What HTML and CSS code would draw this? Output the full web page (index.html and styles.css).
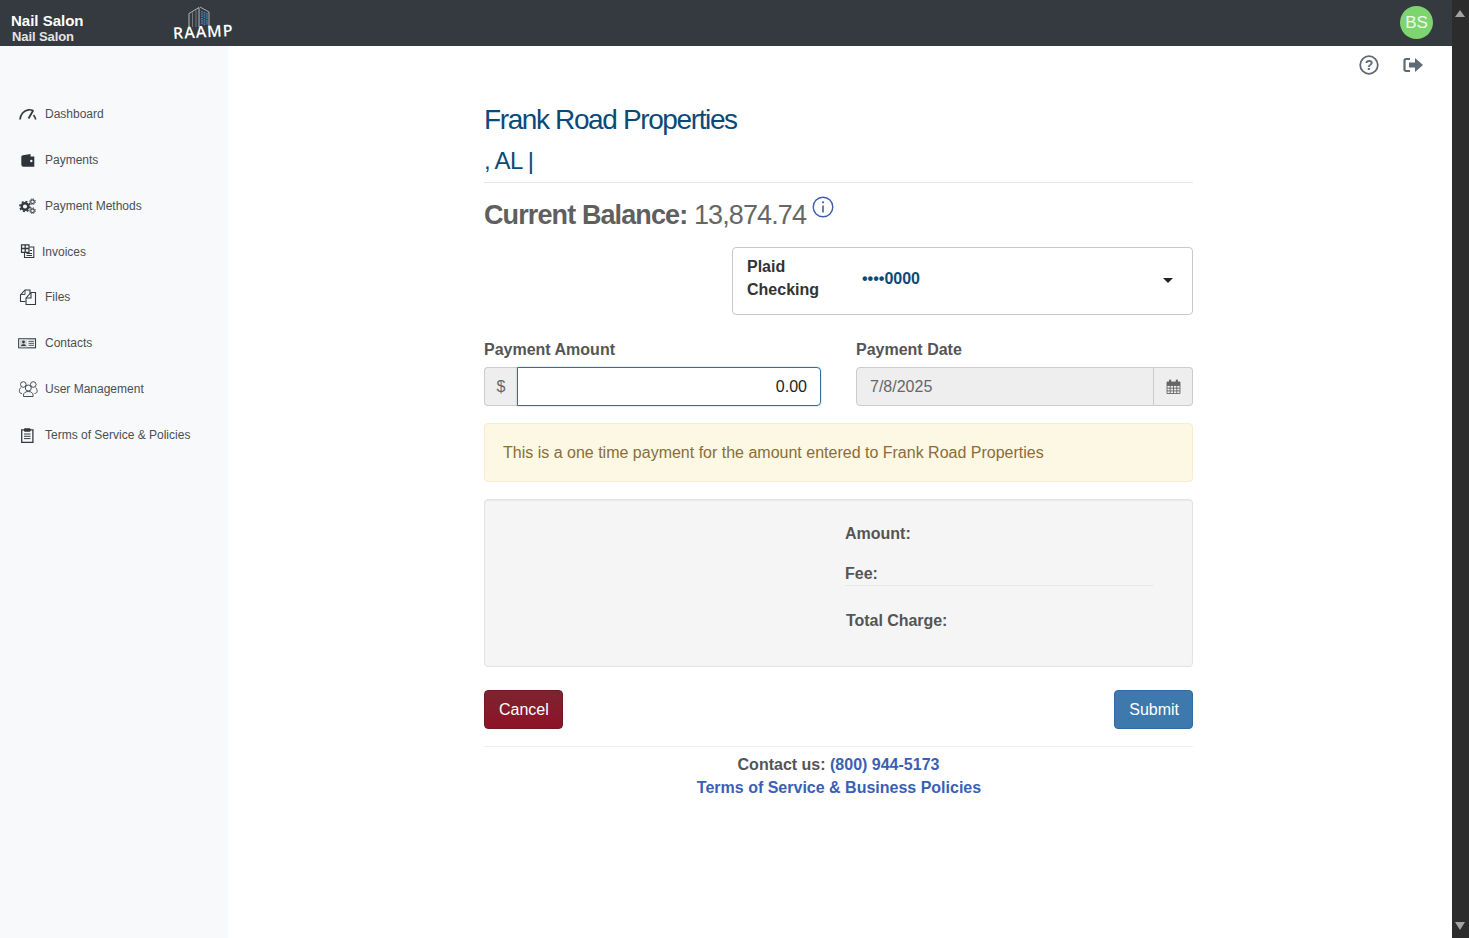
FILE: index.html
```html
<!DOCTYPE html>
<html lang="en">
<head>
<meta charset="utf-8">
<title>Frank Road Properties</title>
<link rel="stylesheet" href="styles.css">
</head>
<body>
<div class="window">
  <div class="page">
    <header class="topbar">
      <div class="brand"><div class="brand-a">Nail Salon</div><div class="brand-b">Nail Salon</div></div>
      <div class="logo">
        <svg class="logo-mark" width="22" height="22" viewBox="0 0 22 22"><path d="M1 21V7.500L11 1.500V21" fill="none" stroke="#b4b7bb" stroke-width="1"/><path d="M4.500 21V6.500M8 21V4.500" stroke="#85898e" stroke-width=".8"/><path d="M12 1l9 5v15" fill="none" stroke="#a9adb2" stroke-width="1"/><path d="M14 5v14M16.500 6v13M19 7v12" stroke="#3f86b3" stroke-width="1.600" stroke-dasharray="1.500 .8"/></svg>
        <span class="logo-text">RAAMP</span>
      </div>
      <div class="avatar">BS</div>
    </header>
    <div class="body">
      <nav class="sidebar">
        <a class="nav-item"><svg class="ico" viewBox="0 0 20 16"><path d="M2 13.500C2.200 9 5.500 4.500 10.300 3.800C12 3.600 13.500 3.800 15 4.500" fill="none" stroke="#343a40" stroke-width="1.700"/><path d="M10.500 12.500L15.300 4.200" stroke="#343a40" stroke-width="1.800"/><path d="M15.500 9C16.500 10.300 17.300 11.800 17.700 13.500" fill="none" stroke="#343a40" stroke-width="1.600"/></svg><span>Dashboard</span></a>
        <a class="nav-item"><svg class="ico" viewBox="0 0 20 16"><path d="M3.300 5c0-1 .7-1.600 1.700-1.800L12.500 2v2.500h3.800v10.300H5.500a2.200 2.200 0 0 1-2.200-2.200z" fill="#2f343a"/><circle cx="13.300" cy="9" r="1.200" fill="#f8f9fa"/></svg><span>Payments</span></a>
        <a class="nav-item"><svg class="ico" viewBox="0 0 20 16"><g fill="none" stroke="#343a40"><circle cx="7" cy="8.500" r="3.300" stroke-width="2.400"/><circle cx="7" cy="8.500" r="5" stroke-width="1.700" stroke-dasharray="2 1.900"/><circle cx="14.500" cy="3.700" r="1.800" stroke-width="1.100"/><circle cx="14.500" cy="3.700" r="2.900" stroke-width="1" stroke-dasharray="1.100 1.180"/><circle cx="14.500" cy="12.700" r="1.800" stroke-width="1.100"/><circle cx="14.500" cy="12.700" r="2.900" stroke-width="1" stroke-dasharray="1.100 1.180"/></g></svg><span>Payment Methods</span></a>
        <a class="nav-item nav-tight"><svg class="ico ico-narrow" viewBox="0 0 19 16"><path d="M3.500.8h7.500v7.500H3.500z" fill="none" stroke="#343a40" stroke-width="1.200"/><path d="M3.500 4.500h7.500M7.200.8v7.500" stroke="#343a40" stroke-width="1.300"/><path d="M6.500 8.500v5h9.300V3H11.500M8.500 9.500h5.500M8.500 11.500h5.500M12 6.500h2" fill="none" stroke="#343a40" stroke-width="1.100"/></svg><span>Invoices</span></a>
        <a class="nav-item"><svg class="ico" viewBox="0 0 20 16"><path d="M7.500 12.500H2.500V6L7 1h5v3.500" fill="none" stroke="#343a40" stroke-width="1.100"/><path d="M7 1v4.500H2.500" fill="none" stroke="#343a40" stroke-width=".9"/><path d="M8 9l5-5.500h4.500V15.500H8zM13 3.500V9H8" fill="none" stroke="#343a40" stroke-width="1.100"/></svg><span>Files</span></a>
        <a class="nav-item"><svg class="ico" viewBox="0 0 20 16"><rect x=".7" y="3.800" width="16.800" height="9" fill="none" stroke="#343a40" stroke-width="1.100"/><rect x="1.200" y="4.300" width="8" height="8" fill="#d4d6d8"/><circle cx="5.500" cy="7" r="1.400" fill="#343a40"/><path d="M3 11c.2-2.500 4.800-2.500 5 0z" fill="#343a40"/><path d="M10.500 6.300h5.500M10.500 8.300h5.500M10.500 10.300h5.500" stroke="#343a40" stroke-width=".9"/></svg><span>Contacts</span></a>
        <a class="nav-item"><svg class="ico" viewBox="0 0 20 16"><g fill="none" stroke="#343a40" stroke-width=".9"><circle cx="5.300" cy="3.500" r="2.800"/><circle cx="15.300" cy="3.500" r="2.800"/><circle cx="10.300" cy="7" r="3"/><path d="M4 12.500C1 12.500.5 9.500 2.800 6.500M16.500 12.500c3 0 3.500-3 1.200-6M5.500 15.500v-1.500c0-2 2-3.500 4.800-3.500s4.800 1.500 4.800 3.500v1.500z"/></g></svg><span>User Management</span></a>
        <a class="nav-item"><svg class="ico" viewBox="0 0 20 16"><path d="M3.700 2.800h11.200v12.500H3.700z" fill="none" stroke="#343a40" stroke-width="1.300"/><path d="M6.500 1.800h5.600v2.400H6.500zM6 7h6.500M6 9.300h6.500M6 11.600h6.500" fill="#343a40" stroke="#343a40" stroke-width="1"/></svg><span>Terms of Service &amp; Policies</span></a>
      </nav>
      <main class="main">
        <div class="tools">
          <svg class="tool-help" width="20" height="20" viewBox="0 0 20 20"><circle cx="10" cy="10" r="8.800" fill="none" stroke="#5f6a73" stroke-width="1.800"/><text x="10" y="15" text-anchor="middle" class="tool-q">?</text></svg>
          <svg class="tool-out" width="20" height="16" viewBox="0 0 20 16"><path d="M7 2H3a1.500 1.500 0 0 0-1.500 1.500v9A1.500 1.500 0 0 0 3 14h4" fill="none" stroke="#5f6a73" stroke-width="2.200"/><path d="M6 5.500h6V1l8 7-8 7v-4.500H6z" fill="#5f6a73"/></svg>
        </div>
        <section class="content">
          <h1 class="title">Frank Road Properties</h1>
          <div class="subtitle">, AL |</div>
          <div class="balance"><strong>Current Balance:</strong> <span>13,874.74</span>
            <svg class="info" width="22" height="22" viewBox="0 0 22 22"><circle cx="11" cy="11" r="9.800" fill="none" stroke="#3f5fae" stroke-width="1.400"/><circle cx="11" cy="6.300" r="1.100" fill="#3f5fae"/><path d="M11 9.500v7" stroke="#3f5fae" stroke-width="1.600"/></svg>
          </div>
          <div class="select-row">
            <div class="select">
              <div class="select-name">Plaid<br>Checking</div>
              <div class="select-num">••••0000</div>
              <div class="caret"></div>
            </div>
          </div>
          <div class="fields">
            <div class="field">
              <label class="label">Payment Amount</label>
              <div class="group">
                <span class="addon addon-left">$</span>
                <div class="input input-focus">0.00</div>
              </div>
            </div>
            <div class="field">
              <label class="label">Payment Date</label>
              <div class="group">
                <div class="input input-off">7/8/2025</div>
                <span class="addon addon-right">
                  <svg width="15" height="15" viewBox="0 0 15 15"><path d="M1 3h13v11.500H1zM1 6.500h13M1 9.200h13M1 11.900h13M4.200 6.500v8M7.500 6.500v8M10.800 6.500v8" fill="none" stroke="#666" stroke-width=".9"/><rect x="1" y="3" width="13" height="3.500" fill="#666"/><rect x="3" y=".5" width="2.200" height="4" rx="1" fill="#666"/><rect x="9.800" y=".5" width="2.200" height="4" rx="1" fill="#666"/></svg>
                </span>
              </div>
            </div>
          </div>
          <div class="alert">This is a one time payment for the amount entered to Frank Road Properties</div>
          <div class="well">
            <div class="well-col">
              <div class="well-row row-amount">Amount:</div>
              <div class="well-row row-fee">Fee:</div>
              <div class="well-row row-total">Total Charge:</div>
            </div>
          </div>
          <div class="actions">
            <button class="btn btn-cancel">Cancel</button>
            <button class="btn btn-submit">Submit</button>
          </div>
          <footer class="foot">
            <div>Contact us: <a class="link">(800) 944-5173</a></div>
            <div class="foot-terms"><a class="link">Terms of Service &amp; Business Policies</a></div>
          </footer>
        </section>
      </main>
    </div>
  </div>
  <div class="scrollbar">
    <span class="arrow-up"></span>
    <span class="arrow-down"></span>
  </div>
</div>
</body>
</html>
```
FILE: styles.css
```css
* { box-sizing: border-box; }
html, body { margin: 0; height: 100%; overflow: hidden; }
body { font-family: "Liberation Sans", Arial, sans-serif; color: #555; background: #fff; }

.window { display: flex; height: 938px; }
.page { flex: 1; min-width: 0; display: flex; flex-direction: column; }

.topbar { height: 46px; background: #343a40; display: flex; align-items: center; position: relative; padding-left: 11px; padding-right: 19px; flex: none; }
.brand { width: 162px; font-weight: 700; padding-top: 11px; }
.brand-a { font-size: 15px; line-height: 16px; color: #fff; }
.brand-b { font-size: 13px; line-height: 16px; color: #e4e4e4; letter-spacing: -.1px; padding-left: 1px; }
.logo { width: 61px; height: 46px; position: relative; }
.logo-mark { position: absolute; left: 15px; top: 6px; }
.logo-text { position: absolute; left: 0; top: 24px; color: #fff; font-size: 16px; font-weight: 600; line-height: 18px; letter-spacing: .9px; font-family: "Open Sans", sans-serif; transform: rotate(-3deg); transform-origin: left center; white-space: nowrap; }
.avatar { margin-left: auto; margin-bottom: 2px; width: 33px; height: 33px; border-radius: 50%; background: #7ed56f; color: #eef9ea; font-size: 17px; text-align: center; line-height: 33px; }

.body { flex: 1; display: flex; min-height: 0; }
.sidebar { width: 228px; flex: none; background: #f8f9fa; padding: 45px 0 0 18px; }
.nav-item { height: 45.870px; display: flex; align-items: center; gap: 7px; font-size: 12px; color: #4a4f54; }
.nav-tight { gap: 5px; }
.ico { width: 20px; height: 16px; flex: none; }
.ico-narrow { width: 19px; }

.main { flex: 1; min-width: 0; padding-left: 256px; position: relative; }
.tools { position: absolute; top: 9px; right: 29px; display: flex; align-items: center; gap: 24px; }
.tool-q { font: 700 14px "Liberation Sans", Arial, sans-serif; fill: #5f6a73; }
.content { width: 709px; padding-top: 55px; }

.title { margin: 0; font-size: 28px; line-height: 38px; font-weight: 400; color: #0b4a78; letter-spacing: -1.380px; }
.subtitle { font-size: 24px; line-height: 30px; margin-top: 7px; padding-bottom: 6px; color: #0b4a78; letter-spacing: -.7px; border-bottom: 1px solid #e8e8e8; }
.balance { margin-top: 14px; height: 37px; font-size: 27px; line-height: 37px; letter-spacing: -.89px; color: #666; position: relative; white-space: nowrap; }
.balance strong { color: #5f5f5f; }
.info { position: absolute; left: 328px; top: -1px; }

.select-row { display: flex; justify-content: flex-end; margin-top: 13px; }
.select { width: 461px; height: 68px; border: 1px solid #c6c8ca; border-radius: 4px; display: flex; align-items: center; padding: 0 19px 0 14px; font-size: 16px; }
.select-name { width: 115px; font-weight: 700; line-height: 23px; color: #333; margin-top: -6px; }
.select-num { font-weight: 700; color: #0b4a78; margin-top: -4px; }
.caret { margin-left: auto; margin-top: -2px; border: 5px solid transparent; border-top: 5px solid #222; border-bottom: 0; }

.fields { display: flex; gap: 35px; margin-top: 25px; }
.field { flex: none; width: 337px; }
.label { display: block; font-size: 16px; line-height: 20px; font-weight: 700; color: #555; margin-bottom: 7px; }
.group { display: flex; height: 39px; }
.addon { background: #eee; border: 1px solid #ccc; display: flex; align-items: center; justify-content: center; font-size: 16px; color: #666; flex: none; }
.addon-left { width: 33px; border-right: 0; border-radius: 4px 0 0 4px; }
.addon-right { width: 39px; border-left: 0; border-radius: 0 4px 4px 0; }
.input { flex: 1; min-width: 0; display: flex; align-items: center; font-size: 16px; padding: 0 13px; }
.input-focus { justify-content: flex-end; color: #222; border: 1px solid #2f6f9f; border-radius: 0 4px 4px 0; box-shadow: 0 0 2px rgba(47, 111, 159, .4); }
.input-off { background: #eee; border: 1px solid #ccc; color: #666; border-radius: 4px 0 0 4px; }

.alert { margin-top: 17px; height: 59px; background: #fcf8e3; border: 1px solid #faebcc; border-radius: 4px; padding: 0 18px; display: flex; align-items: center; font-size: 16px; color: #8a6d3b; }

.well { margin-top: 17px; height: 168px; background: #f5f5f5; border: 1px solid #e3e3e3; border-radius: 4px; box-shadow: inset 0 1px 1px rgba(0, 0, 0, .05); padding: 0 38px 0 360px; }
.well-row { font-size: 16px; line-height: 20px; font-weight: 700; color: #555; }
.row-amount { margin-top: 24px; }
.row-fee { margin-top: 20px; padding-bottom: 1px; border-bottom: 1px solid #e8e8e8; }
.row-total { margin-top: 25px; padding-left: 1px; letter-spacing: -.05px; }

.actions { display: flex; justify-content: space-between; margin-top: 23px; padding-bottom: 17px; border-bottom: 1px solid #eee; }
.btn { height: 39px; border-radius: 4px; font: 16px "Liberation Sans", Arial, sans-serif; color: #fff; padding: 0 13px 0 14px; }
.btn-cancel { background: linear-gradient(#7c2430, #8e1326); border: 1px solid #6d1a24; }
.btn-submit { background: #3d79ac; border: 1px solid #2e6da4; }

.foot { text-align: center; font-size: 16px; line-height: 23px; font-weight: 700; color: #555; padding-top: 6px; }
.foot-terms { padding-left: 1px; }
.link { color: #3b5fb5; }

.scrollbar { width: 17px; flex: none; background: #2c2c2c; position: relative; }
.arrow-up, .arrow-down { position: absolute; left: 3px; border: 5.500px solid transparent; }
.arrow-up { top: 10px; border-top: 0; border-bottom: 7px solid #a3a3a3; }
.arrow-down { bottom: 8px; border-bottom: 0; border-top: 8px solid #a3a3a3; }
```
